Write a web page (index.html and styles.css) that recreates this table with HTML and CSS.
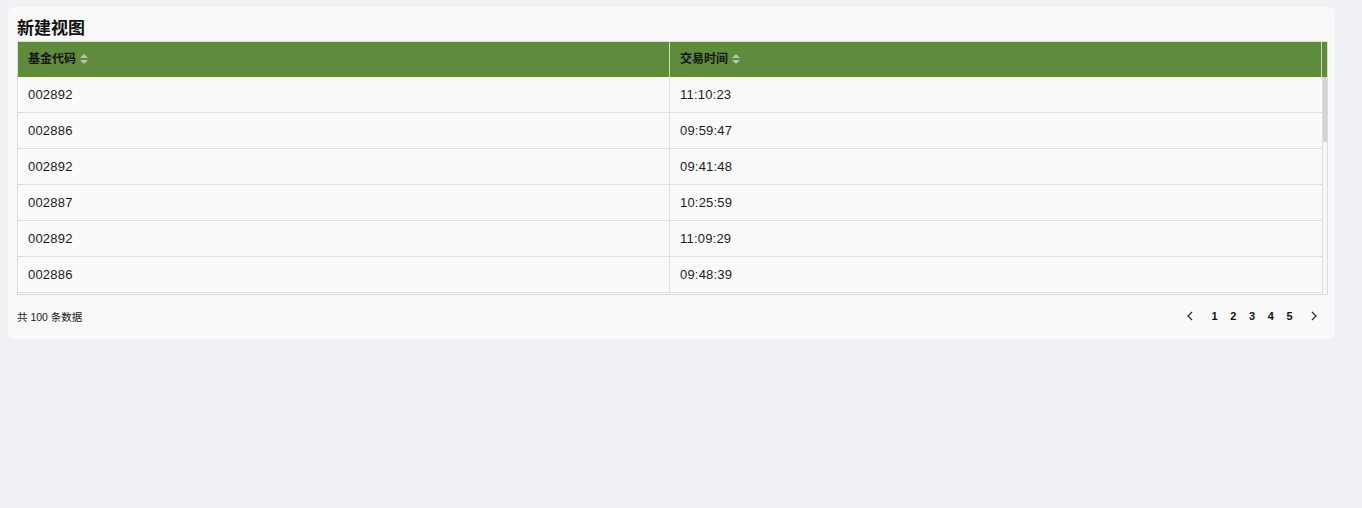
FILE: index.html
```html
<!DOCTYPE html>
<html lang="zh">
<head>
<meta charset="utf-8">
<title>新建视图</title>
<link rel="stylesheet" href="styles.css">
</head>
<body>
<div class="page">
  <section class="card">
    <h1 class="title">新建视图</h1>
    <div class="table-wrap">
      <div class="thead">
        <div class="th">基金代码<span class="sorter"><i class="up"></i><i class="down"></i></span></div>
        <div class="th">交易时间<span class="sorter"><i class="up"></i><i class="down"></i></span></div>
        <div class="th gutter"></div>
      </div>
      <div class="tbody">
        <div class="rows">
          <div class="tr"><div class="td">002892</div><div class="td">11:10:23</div></div>
          <div class="tr"><div class="td">002886</div><div class="td">09:59:47</div></div>
          <div class="tr"><div class="td">002892</div><div class="td">09:41:48</div></div>
          <div class="tr"><div class="td">002887</div><div class="td">10:25:59</div></div>
          <div class="tr"><div class="td">002892</div><div class="td">11:09:29</div></div>
          <div class="tr"><div class="td">002886</div><div class="td">09:48:39</div></div>
        </div>
        <div class="scrollbar"><div class="thumb"></div></div>
      </div>
    </div>
    <div class="footer">
      <span class="total">共 100 条数据</span>
      <nav class="pager">
        <span class="nav-btn"><svg width="6" height="10" viewBox="0 0 6 10"><path d="M5 1L1 5l4 4" fill="none" stroke="#333" stroke-width="1.3"/></svg></span>
        <span class="pg">1</span>
        <span class="pg">2</span>
        <span class="pg">3</span>
        <span class="pg">4</span>
        <span class="pg">5</span>
        <span class="nav-btn"><svg width="6" height="10" viewBox="0 0 6 10"><path d="M1 1l4 4-4 4" fill="none" stroke="#333" stroke-width="1.3"/></svg></span>
      </nav>
    </div>
  </section>
</div>
</body>
</html>
```

FILE: styles.css
```css
html, body {
  margin: 0;
  padding: 0;
  background: #f0f1f5;
  font-family: "Liberation Sans", "Noto Sans CJK SC", sans-serif;
  color: #1f1f1f;
}

.page {
  padding: 7px 0 0 8px;
}

.card {
  width: 1327px;
  height: 332px;
  box-sizing: border-box;
  background: #f9f9fa;
  border-radius: 6px;
  padding: 9px 7px 0 9px;
  display: flex;
  flex-direction: column;
}

.title {
  margin: 0;
  padding-bottom: 3px;
  font-size: 17px;
  line-height: 22px;
  font-weight: bold;
  color: #111;
  font-family: "Noto Sans CJK SC", sans-serif;
}

.table-wrap {
  border: 1px solid #dcdcdc;
  border-top-color: #cfe6bd;
  background: #fafafa;
}

.thead {
  display: grid;
  grid-template-columns: 1fr 1fr 5px;
  height: 35px;
  background: #5f8b3c;
}

.th {
  display: flex;
  align-items: center;
  padding: 0 0 5px 10px;
  box-sizing: border-box;
  font-size: 12px;
  font-weight: bold;
  color: #151515;
  font-family: "Noto Sans CJK SC", sans-serif;
  border-right: 1px solid #c5deb0;
}

.th.gutter {
  padding: 0;
  border-right: none;
}

.sorter {
  display: inline-flex;
  flex-direction: column;
  gap: 2px;
  margin-left: 4px;
  margin-top: 4px;
}

.sorter i {
  display: block;
  width: 0;
  height: 0;
  border-left: 4px solid transparent;
  border-right: 4px solid transparent;
}

.sorter .up {
  border-bottom: 4px solid #b5c6a9;
}

.sorter .down {
  border-top: 4px solid #b5c6a9;
}

.tbody {
  display: grid;
  grid-template-columns: 1fr 5px;
  height: 217px;
}

.scrollbar {
  background: #f7f7f7;
  border-left: 1px solid #dedede;
}

.thumb {
  height: 65px;
  background: #d4d4d4;
}

.tr {
  display: grid;
  grid-template-columns: 1fr 1fr;
  height: 36px;
  box-sizing: border-box;
  border-bottom: 1px solid #e0e0e0;
}

.td {
  display: flex;
  align-items: center;
  padding-left: 10px;
  font-size: 13px;
  color: #1a1a1a;
  border-right: 1px solid #e0e0e0;
  letter-spacing: 0.2px;
}

.td:last-child {
  border-right: none;
}

.footer {
  display: flex;
  align-items: center;
  justify-content: space-between;
  height: 42px;
}

.total {
  font-size: 10.5px;
  color: #1a1a1a;
  font-family: "Liberation Sans", "Noto Sans CJK SC", sans-serif;
}

.pager {
  display: flex;
  align-items: center;
  padding-right: 4px;
}

.nav-btn {
  display: flex;
  align-items: center;
  justify-content: center;
  width: 20px;
  height: 20px;
}

.nav-btn:first-child {
  margin-right: 5px;
}

.nav-btn:last-child {
  margin-left: 5px;
}

.pg {
  width: 18.75px;
  text-align: center;
  font-size: 11px;
  font-weight: bold;
  color: #111;
}
```
